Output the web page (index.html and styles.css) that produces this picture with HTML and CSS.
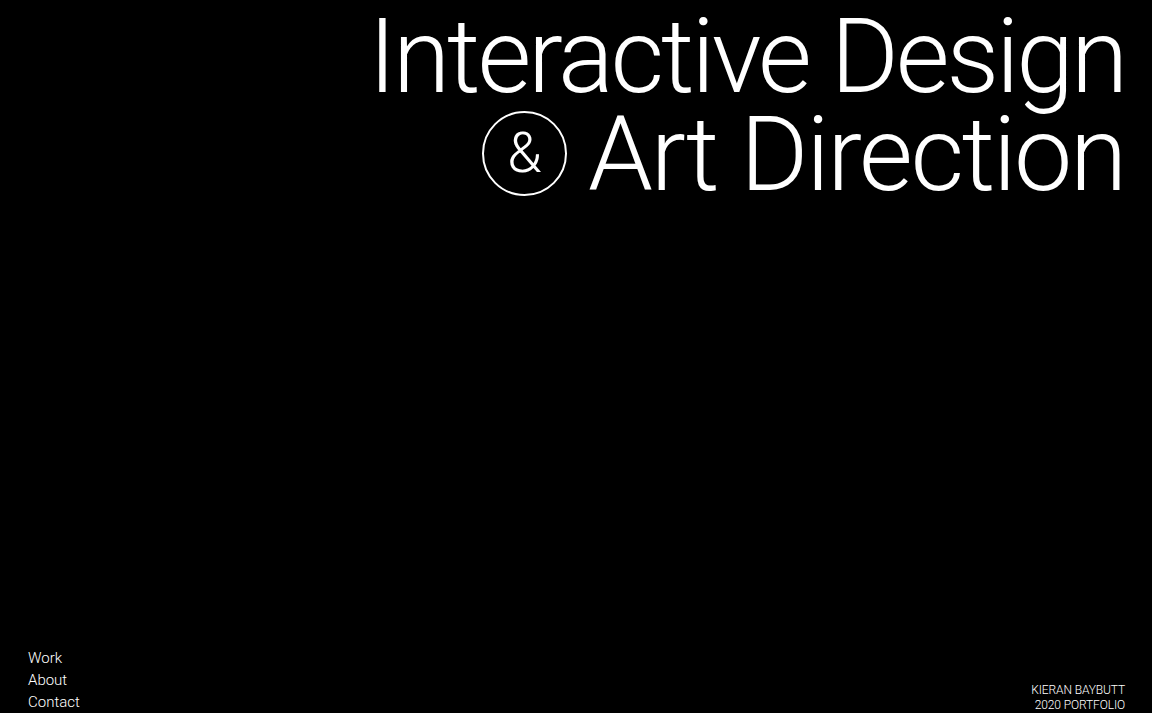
FILE: index.html
```html
<!DOCTYPE html>
<html lang="en">
<head>
<meta charset="utf-8">
<title>Kieran Baybutt — Portfolio</title>
<link rel="stylesheet" href="styles.css">
</head>
<body>
<div class="page">
  <header class="hero">
    <h1 class="title">
      <span class="line">Interactive Design</span>
      <span class="line line-two"><span class="amp">&amp;</span>Art Direction</span>
    </h1>
  </header>
  <footer class="foot">
    <nav class="nav">
      <a href="#">Work</a>
      <a href="#">About</a>
      <a href="#">Contact</a>
    </nav>
    <div class="credit">
      <span>KIERAN BAYBUTT</span>
      <span>2020 PORTFOLIO</span>
    </div>
  </footer>
</div>
</body>
</html>
```
FILE: styles.css
```css
html, body {
  margin: 0;
  padding: 0;
  background: #000;
  color: #fff;
  font-family: Roboto, "Liberation Sans", sans-serif;
}
.page {
  height: 713px;
  display: flex;
  flex-direction: column;
  justify-content: space-between;
  overflow: hidden;
}
.hero {
  padding: 0 27px 0 0;
  text-align: right;
}
.title {
  margin: 0;
  font-weight: 300;
  font-size: 104px;
  line-height: 98px;
  letter-spacing: -0.03em;
  padding-top: 8px;
}
.line {
  display: block;
}
.line-two {
  letter-spacing: -0.022em;
}
.amp {
  box-sizing: border-box;
  display: inline-flex;
  align-items: center;
  justify-content: center;
  width: 85px;
  height: 85px;
  border: 2px solid #fff;
  border-radius: 50%;
  font-size: 56px;
  line-height: 1;
  letter-spacing: 0;
  vertical-align: 18px;
  margin-right: 21px;
}
.foot {
  display: flex;
  justify-content: space-between;
  align-items: flex-end;
  padding: 0 27px 0 28px;
}
.nav {
  display: flex;
  flex-direction: column;
  font-size: 15px;
  line-height: 22px;
  font-weight: 300;
}
.nav a {
  color: #fff;
  text-decoration: none;
}
.credit {
  display: flex;
  flex-direction: column;
  align-items: flex-end;
  font-size: 12px;
  line-height: 15px;
  font-weight: 300;
  letter-spacing: -0.01em;
  margin-bottom: 0;
}
```
